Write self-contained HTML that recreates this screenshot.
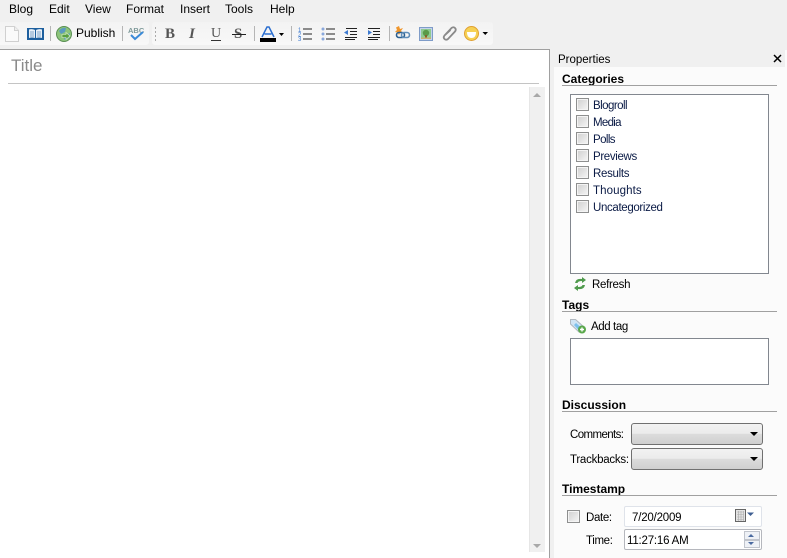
<!DOCTYPE html>
<html><head><meta charset="utf-8"><style>
html,body{margin:0;padding:0}
body{width:787px;height:558px;overflow:hidden;position:relative;background:#f0f0f0;font-family:"Liberation Sans",sans-serif;font-size:12px;color:#000}
.a{position:absolute}
.t{position:absolute;white-space:nowrap;line-height:14px}
.s{font-size:11.5px}
.n{font-size:11.5px;color:#0a1a45}
.h{position:absolute;left:562px;font-weight:bold;white-space:nowrap;line-height:14px;font-size:12px}
.r{position:absolute;left:562px;width:215px;height:1px;background:#a0a0a0}
.cb{position:absolute;left:576px;width:11px;height:11px;border:1px solid #8e8f8f;background:linear-gradient(135deg,#cfcfcf,#f6f6f6);box-shadow:inset 0 0 0 1px #f4f4f4}
.sep{position:absolute;top:26px;width:1px;height:15px;background:#b5b5b5}
svg{position:absolute;overflow:visible}
.dd{position:absolute;left:631px;width:130px;height:20px;border:1px solid #707070;border-radius:3px;background:linear-gradient(#f2f2f2 0,#ebebeb 48%,#dcdcdc 50%,#cfcfcf 100%)}
.dd:after{content:"";position:absolute;right:4px;top:8px;border:4px solid transparent;border-top:4px solid #000;border-bottom:0}
</style></head><body>
<span class="t" style="left:9px;top:2px">Blog</span>
<span class="t" style="left:49px;top:2px">Edit</span>
<span class="t" style="left:85px;top:2px">View</span>
<span class="t" style="left:126px;top:2px">Format</span>
<span class="t" style="left:180px;top:2px">Insert</span>
<span class="t" style="left:225px;top:2px">Tools</span>
<span class="t" style="left:270px;top:2px">Help</span>

<div class="a" style="left:0;top:22px;width:149px;height:23px;background:linear-gradient(#f3f3f3,#f8f8f8);border-radius:0 3px 3px 0"></div>
<div class="a" style="left:152px;top:22px;width:341px;height:23px;background:linear-gradient(#f3f3f3,#f8f8f8);border-radius:3px"></div>

<svg style="left:5px;top:26px" width="14" height="16"><path d="M.5.500H9.500L13.500 4.500V15.500H.5Z" fill="#fafafa" stroke="#d0d0d0"/><path d="M9.500.500V4.500H13.500" fill="#eee" stroke="#d0d0d0"/></svg>
<svg style="left:27px;top:27px" width="17" height="14"><path d="M0 1H17V13H0Z" fill="#1d5f9e"/><path d="M2 2.500Q5 1.500 8 3V11Q5 10 2 11ZM9 3Q12 1.500 15 2.500V11Q12 10 9 11Z" fill="#e8f0f8"/><path d="M3 5H7M3 7H7M3 9H7M10 5H14M10 7H14M10 9H14" stroke="#7fa5c8"/></svg>
<div class="sep" style="left:50px"></div>
<svg style="left:56px;top:26px" width="16" height="16"><circle cx="8" cy="8" r="7.500" fill="#8cc47a" stroke="#5b8f55"/><path d="M3 5Q6 1 10 2L9 6 5 8ZM7 10L10 9 14 7 13 12 9 14Z" fill="#5a9ac0"/><path d="M6 8.500H10V6.500L14 10 10 13.500V11.500H6Z" fill="#58a040" stroke="#e0f0d0" stroke-width=".6"/></svg>
<span class="t" style="left:76px;top:26px">Publish</span>
<div class="sep" style="left:122px"></div>
<svg style="left:128px;top:26px" width="17" height="15"><text x="0" y="7" font-family="Liberation Sans" font-size="7.500" font-weight="bold" fill="#7f9a9a">ABC</text><path d="M3 9L7 13 15 6" fill="none" stroke="#3a8ad8" stroke-width="2"/></svg>
<svg style="left:155px;top:27px" width="2" height="14"><path d="M.5 0V14" stroke="#aaa" stroke-dasharray="2 2"/></svg>

<span class="t" style="left:165px;top:27px;font-family:'Liberation Serif',serif;font-weight:bold;font-size:15px;color:#555">B</span>
<span class="t" style="left:189px;top:27px;font-family:'Liberation Serif',serif;font-weight:bold;font-style:italic;font-size:15px;color:#555">I</span>
<span class="t" style="left:211px;top:27px;font-family:'Liberation Serif',serif;font-size:14px;color:#555">U</span>
<div class="a" style="left:211px;top:40px;width:10px;height:1px;background:#333"></div>
<span class="t" style="left:234px;top:27px;font-family:'Liberation Serif',serif;font-weight:bold;font-size:15px;color:#555">S</span>
<div class="a" style="left:232px;top:34px;width:14px;height:1px;background:#222"></div>
<div class="sep" style="left:254px"></div>
<svg style="left:260px;top:26px" width="24" height="16"><path d="M2 11L7 1H9L14 11M4.500 8H11.500" fill="none" stroke="#2c6fd0" stroke-width="1.500"/><rect y="12" width="16" height="4" fill="#000"/><path d="M19 7H24L21.500 10Z" fill="#000"/></svg>
<div class="sep" style="left:291px"></div>
<svg style="left:298px;top:27px" width="14" height="14"><path d="M5 2H14M5 7H14M5 12H14" stroke="#222"/><text x="0" y="5" font-family="Liberation Sans" font-size="6" fill="#3d7ad0">1</text><text x="0" y="9.500" font-family="Liberation Sans" font-size="6" fill="#3d7ad0">2</text><text x="0" y="14" font-family="Liberation Sans" font-size="6" fill="#3d7ad0">3</text></svg>
<svg style="left:321px;top:27px" width="14" height="14"><path d="M5 2H14M5 7H14M5 12H14" stroke="#222"/><circle cx="2" cy="2" r="1.500" fill="#8aa8dc"/><circle cx="2" cy="7" r="1.500" fill="#8aa8dc"/><circle cx="2" cy="12" r="1.500" fill="#8aa8dc"/></svg>
<svg style="left:344px;top:28px" width="14" height="12"><path d="M2 .5H13M6 3.500H13M6 6.500H13M1 9.500H13M1 11.500H11" stroke="#222"/><path d="M0 4.500L4 2V7Z" fill="#3d7ad0"/></svg>
<svg style="left:367px;top:28px" width="14" height="12"><path d="M1 .5H13M6 3.500H13M6 6.500H13M1 9.500H13M1 11.500H11" stroke="#222"/><path d="M5 4.500L1 2V7Z" fill="#3d7ad0"/></svg>
<div class="sep" style="left:389px"></div>
<svg style="left:395px;top:26px" width="16" height="15"><path d="M4 0L5 3 8 2 6 5 8 7 5 7 4 9 2.500 6.500 0 6 2 4 1 1.500Z" fill="#f0962c"/><rect x="1.500" y="6.500" width="8" height="5" rx="2.500" fill="none" stroke="#2a5f90" stroke-width="1.600"/><rect x="6.500" y="6.500" width="8" height="5" rx="2.500" fill="none" stroke="#5f8db8" stroke-width="1.600"/></svg>
<svg style="left:419px;top:27px" width="14" height="14"><rect x=".5" y=".5" width="13" height="13" fill="#c4d4ec" stroke="#7f9cc8"/><rect x="2" y="2" width="10" height="10" fill="#8ecb90"/><circle cx="7" cy="6" r="3.200" fill="#5a9a48"/><rect x="6" y="8" width="2" height="3" fill="#87602c"/><rect x="2" y="10.500" width="10" height="1.500" fill="#c9b070"/></svg>
<svg style="left:442px;top:26px" width="15" height="15"><path d="M2.500 9.500L9.500 2Q11.500.5 13 2T13 5.500L6 13Q4 14.500 2.500 13T2.500 9.500L8.500 4" fill="none" stroke="#8a8a8a" stroke-width="1.800"/></svg>
<svg style="left:464px;top:26px" width="26" height="15"><circle cx="7.500" cy="7.500" r="7" fill="#f6d154" stroke="#e0a030"/><path d="M3 6H12Q12 12 7.500 12T3 6Z" fill="#fff"/><path d="M18.500 6H24L21.250 9Z" fill="#000"/></svg>

<div class="a" style="left:0;top:49px;width:550px;height:509px;background:#fff"></div>
<div class="a" style="left:0;top:49px;width:550px;height:1px;background:#a0a0a0"></div>
<div class="a" style="left:549px;top:49px;width:1px;height:509px;background:#a0a0a0"></div>
<span class="t" style="left:11px;top:57px;font-size:17px;line-height:18px;color:#8a8a8a">Title</span>
<div class="a" style="left:8px;top:83px;width:531px;height:1px;background:#c4c4c4"></div>
<div class="a" style="left:529px;top:87px;width:16px;height:465px;background:#f0f0f0;border-left:1px solid #e6e6e6;box-sizing:border-box"></div>
<div class="a" style="left:533px;top:93px;border:4px solid transparent;border-top:0;border-bottom:4px solid #a8a8a8"></div>
<div class="a" style="left:533px;top:544px;border:4px solid transparent;border-bottom:0;border-top:4px solid #a8a8a8"></div>

<div class="a" style="left:554px;top:50px;width:233px;height:508px;background:#fbfbfb"></div>
<div class="a" style="left:554px;top:50px;width:231px;height:17px;background:#f0f0f0"></div>
<span class="t" style="left:558px;top:53px;font-size:11.500px">Properties</span>
<svg style="left:773px;top:54px" width="9" height="9"><path d="M1 1L8 8M8 1L1 8" stroke="#000" stroke-width="1.500"/></svg>

<span class="h" style="top:72px">Categories</span>
<div class="r" style="top:85px"></div>
<div class="a" style="left:570px;top:94px;width:197px;height:178px;border:1px solid #82878f;background:#fff"></div>
<div class="cb" style="top:98px"></div><span class="t n" style="left:593px;top:99px;letter-spacing:-.55px">Blogroll</span>
<div class="cb" style="top:115px"></div><span class="t n" style="left:593px;top:116px;letter-spacing:-.7px">Media</span>
<div class="cb" style="top:132px"></div><span class="t n" style="left:593px;top:133px;letter-spacing:-.6px">Polls</span>
<div class="cb" style="top:149px"></div><span class="t n" style="left:593px;top:150px;letter-spacing:-.35px">Previews</span>
<div class="cb" style="top:166px"></div><span class="t n" style="left:593px;top:167px;letter-spacing:-.3px">Results</span>
<div class="cb" style="top:183px"></div><span class="t n" style="left:593px;top:184px;letter-spacing:.1px">Thoughts</span>
<div class="cb" style="top:200px"></div><span class="t n" style="left:593px;top:201px;letter-spacing:-.35px">Uncategorized</span>

<svg style="left:574px;top:277px" width="12" height="14"><path d="M1 6Q2 1 8 2V0L12 3 8 6V4Q4 4 3.500 6ZM11 8Q10 13 4 12V14L0 11 4 8V10Q8 10 8.500 8Z" fill="#4f9a4c"/></svg>
<span class="t s" style="left:592px;top:278px;letter-spacing:-.3px">Refresh</span>

<span class="h" style="top:298px">Tags</span>
<div class="r" style="top:311px"></div>
<svg style="left:570px;top:318px" width="17" height="16"><path d="M.5 1.500H5.500L14 9 9 14 .5 6Z" fill="#d0e4f4" stroke="#b0b8c0"/><path d="M6 5L11 9.500 8.500 12 4 7Z" fill="#7cc0ec"/><circle cx="12" cy="11.500" r="4" fill="#5aa84c"/><path d="M10 11.500H14M12 9.500V13.500" stroke="#fff" stroke-width="1.400"/></svg>
<span class="t s" style="left:591px;top:320px;letter-spacing:-.4px">Add tag</span>
<div class="a" style="left:570px;top:338px;width:197px;height:45px;border:1px solid #82878f;background:#fff"></div>

<span class="h" style="top:398px">Discussion</span>
<div class="r" style="top:411px"></div>
<span class="t s" style="left:570px;top:428px;letter-spacing:-.6px">Comments:</span>
<div class="dd" style="top:423px"></div>
<span class="t s" style="left:570px;top:453px;letter-spacing:-.25px">Trackbacks:</span>
<div class="dd" style="top:448px"></div>

<span class="h" style="top:482px">Timestamp</span>
<div class="r" style="top:495px"></div>
<div class="cb" style="left:567px;top:510px"></div>
<span class="t s" style="left:586px;top:511px;letter-spacing:-.35px">Date:</span>
<div class="a" style="left:624px;top:506px;width:136px;height:19px;border:1px solid #dfe3ea;border-radius:2px;background:#fff"></div>
<span class="t s" style="left:632px;top:511px;letter-spacing:-.2px">7/20/2009</span>
<svg style="left:735px;top:509px" width="27" height="14"><rect x=".5" y=".5" width="10" height="12" fill="#e4e4e4" stroke="#666"/><path d="M2 3H9M2 5.500H9M2 8H9M2 10.500H9M3.500 2V12M6 2V12M8.500 2V12" stroke="#aaa" stroke-width=".6"/><path d="M12 3.500H19L15.500 7Z" fill="#3f5f92"/></svg>
<span class="t s" style="left:586px;top:534px;letter-spacing:-.35px">Time:</span>
<div class="a" style="left:624px;top:529px;width:136px;height:19px;border:1px solid #b5b7bd;border-radius:2px;background:#fff"></div>
<span class="t s" style="left:627px;top:534px;letter-spacing:-.2px">11:27:16 AM</span>
<div class="a" style="left:744px;top:531px;width:14px;height:7px;background:#eef1f6;border:1px solid #c0c4cc"></div>
<div class="a" style="left:744px;top:540px;width:14px;height:6px;background:#eef1f6;border:1px solid #c0c4cc"></div>
<div class="a" style="left:748px;top:534px;border:3px solid transparent;border-top:0;border-bottom:3px solid #4a6aa0"></div>
<div class="a" style="left:748px;top:542px;border:3px solid transparent;border-bottom:0;border-top:3px solid #4a6aa0"></div>
</body></html>
